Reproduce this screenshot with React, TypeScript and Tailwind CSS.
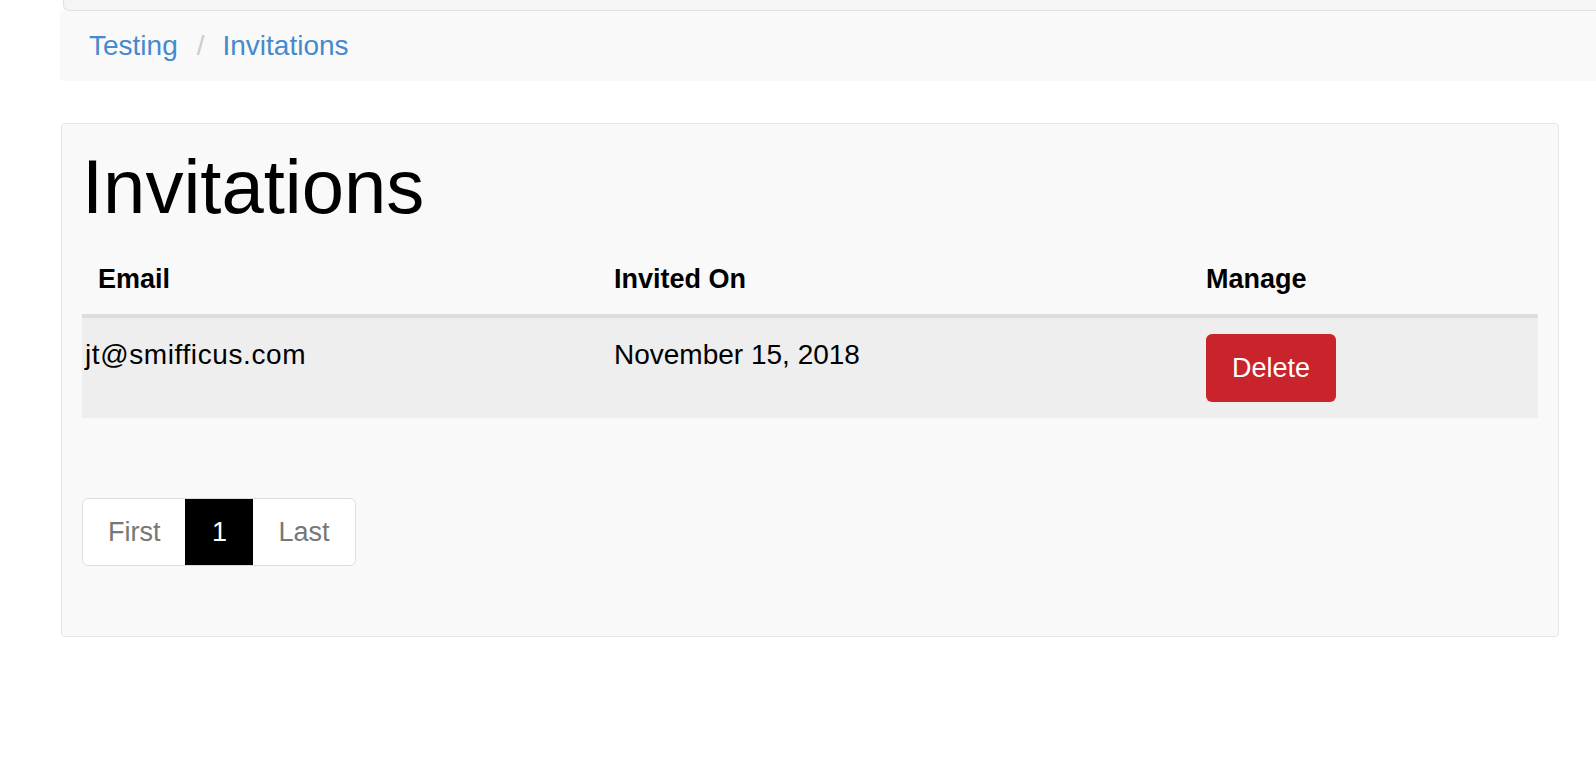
import React from 'react';

interface Invitation {
  email: string;
  invitedOn: string;
}

const invitations: Invitation[] = [{ email: 'jt@smifficus.com', invitedOn: 'November 15, 2018' }];

const Breadcrumb: React.FC = () => (
  <div className="flex h-[70px] w-[1560px] items-center rounded-bl-[5px] bg-[#f9f9f9] pl-[29px] text-[28px] leading-none">
    <a href="#" className="text-[#4689cc]">
      Testing
    </a>
    <span className="ml-[19px] text-[#cccccc]">/</span>
    <a href="#" className="ml-[18px] text-[#4689cc]">
      Invitations
    </a>
  </div>
);

const Pagination: React.FC = () => (
  <div className="flex h-[68px] w-fit overflow-hidden rounded-[6px] border border-[#dddddd] bg-white text-[27px] leading-none">
    <span className="flex items-center px-[25px] text-[#777777]">First</span>
    <span className="flex w-[68px] items-center justify-center bg-black text-white">1</span>
    <span className="flex items-center px-[25px] text-[#777777]">Last</span>
  </div>
);

export default function App() {
  return (
    <div
      className="min-h-screen overflow-hidden bg-white text-black"
      style={{ fontFamily: '"Liberation Sans", Arial, sans-serif' }}
    >
      {/* top nav remnant */}
      <div className="ml-[63px] h-[11px] w-[1560px] rounded-bl-[6px] border-b border-l border-[#e2e2e2] bg-[#f5f5f5]" />

      <div className="ml-[60px]">
        <Breadcrumb />
      </div>

      <div className="ml-[61px] mt-[42px] w-[1498px] rounded-[4px] border border-[#e6e6e6] bg-[#f9f9f9] px-[20px] pb-[70px] pt-[23px]">
        <h1 className="text-[76px] leading-[79px]">Invitations</h1>

        <table className="mt-[18px] w-[1456px] border-collapse text-left text-[28px] leading-[38px]">
          <thead>
            <tr className="border-b-4 border-[#dddddd]">
              <th className="w-[516px] px-[16px] py-[16px] text-[27px] font-bold">Email</th>
              <th className="w-[592px] px-[16px] py-[16px] text-[27px] font-bold">Invited On</th>
              <th className="px-[16px] py-[16px] text-[27px] font-bold">Manage</th>
            </tr>
          </thead>
          <tbody>
            {invitations.map((inv) => (
              <tr key={inv.email} className="bg-[#eeeeee] align-top">
                <td className="py-[16px] pl-[3px] pr-[16px] leading-[42px] tracking-[0.6px]">{inv.email}</td>
                <td className="px-[16px] py-[16px] leading-[42px]">{inv.invitedOn}</td>
                <td className="px-[16px] py-[16px]">
                  <button
                    type="button"
                    className="flex h-[68px] items-center rounded-[6px] bg-[#c9232b] px-[26px] text-[27px] leading-none text-white"
                  >
                    Delete
                  </button>
                </td>
              </tr>
            ))}
          </tbody>
        </table>

        <div className="mt-[80px]">
          <Pagination />
        </div>
      </div>
    </div>
  );
}
